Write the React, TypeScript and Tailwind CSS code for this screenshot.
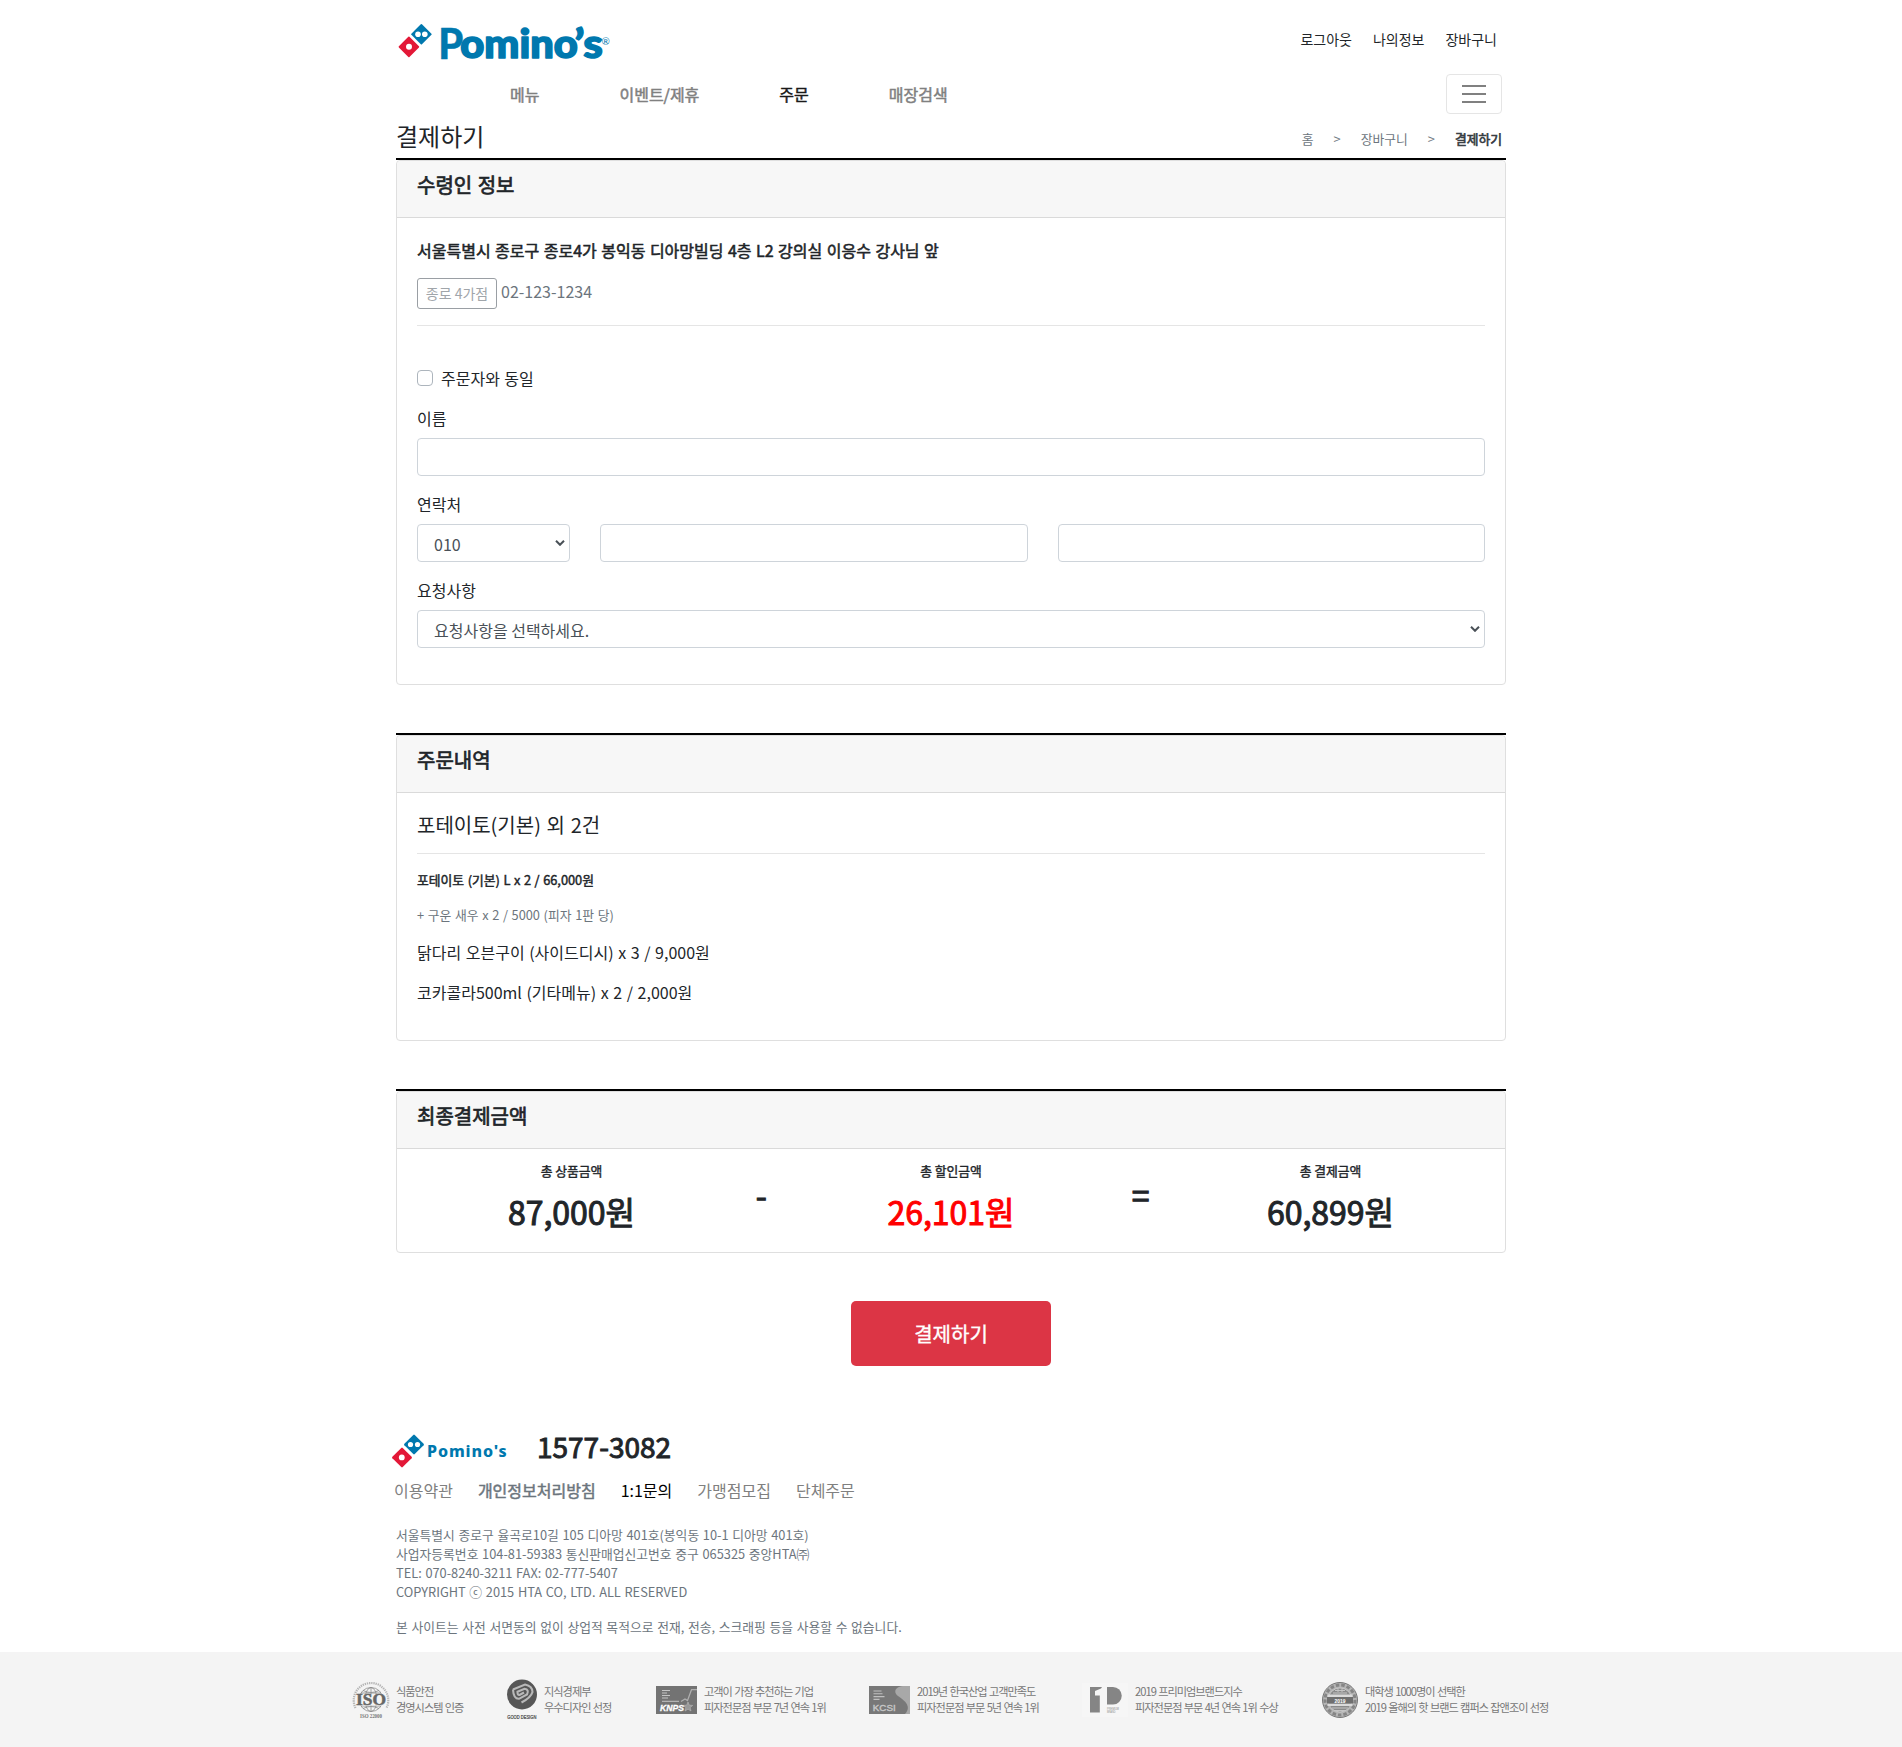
import React from "react";

function Dice({ className }: { className: string }) {
  return (
    <svg viewBox="0 0 34 34" className={className} aria-hidden="true">
      <rect x="15.7" y="3.2" width="14.6" height="14.6" rx="1" transform="rotate(45 23 10.5)" fill="#0078ae" />
      <rect x="3.7" y="16.2" width="14.6" height="14.6" rx="1" transform="rotate(45 11 23.5)" fill="#e31837" />
      <circle cx="19.5" cy="10.5" r="2.6" fill="#fff" />
      <circle cx="26.5" cy="10.5" r="2.6" fill="#fff" />
      <circle cx="10.8" cy="23.4" r="2.9" fill="#fff" />
    </svg>
  );
}

function HeaderLogo() {
  return (
    <svg width="224" height="48" viewBox="396 16 224 48" className="block overflow-visible">
      <rect x="413.9" y="26.8" width="15" height="15" rx="0.8" transform="rotate(45 421.4 34.3)" fill="#0078ae" />
      <rect x="401.4" y="39.4" width="15" height="15" rx="0.8" transform="rotate(45 408.9 46.9)" fill="#e31837" />
      <circle cx="418" cy="34.3" r="2.8" fill="#fff" />
      <circle cx="424.8" cy="34.3" r="2.8" fill="#fff" />
      <circle cx="409" cy="46.8" r="3" fill="#fff" />
      <g fontFamily="Lato" fontWeight="900" fill="#0078ae" stroke="#0078ae" strokeLinejoin="round">
        <text x="438.2" y="58.6" fontSize="42" strokeWidth="0.4" textLength="25" lengthAdjust="spacingAndGlyphs">
          P
        </text>
        <text x="460.3" y="57.9" fontSize="39" strokeWidth="1.6" textLength="117.5" lengthAdjust="spacingAndGlyphs">
          omino
        </text>
        <text x="574.5" y="58" fontSize="40" strokeWidth="1.4" textLength="28.5" lengthAdjust="spacingAndGlyphs">
          ’s
        </text>
      </g>
      <text x="601.500" y="45" fontFamily="Lato" fontSize="10" fill="#0078ae">
        ®
      </text>
    </svg>
  );
}

function Card({ title, className, children }: { title: string; className: string; children: React.ReactNode }) {
  return (
    <section className="border-t-2 border-black">
      <div className={"flex flex-col rounded border border-[#dfdfdf] " + className}>
        <h5 className="h-[57px] shrink-0 rounded-t border-b border-[#dadada] bg-[#f7f7f7] px-5 pt-3 text-xl leading-6 [-webkit-text-stroke:0.7px] [word-spacing:1px]">
          {title}
        </h5>
        {children}
      </div>
    </section>
  );
}

function Chevron() {
  return (
    <svg width="10" height="6" viewBox="0 0 10 6" fill="none" stroke="#495057" strokeWidth="2" className="block">
      <path d="M1 0.8 5 4.8 9 0.8" />
    </svg>
  );
}

function Select({ text }: { text: string }) {
  return (
    <div className="flex h-[38px] items-center justify-between rounded border border-[#ced4da] pr-[4px] pl-4 text-[#495057]">
      <span className="pt-0.5">{text}</span>
      <Chevron />
    </div>
  );
}

function TextField() {
  return <input className="block h-[38px] w-full rounded border border-[#ced4da] px-3" />;
}

function Amount({ label, value, red }: { label: string; value: string; red?: boolean }) {
  return (
    <div className="text-center">
      <div className="text-[12.8px] leading-[19px] [-webkit-text-stroke:0.4px]">{label}</div>
      <div className={"mt-3 text-[32px] leading-[38px] [-webkit-text-stroke:1px] " + (red ? "text-[#ff0000]" : "")}>{value}</div>
    </div>
  );
}

function Operator({ sign }: { sign: string }) {
  return <div className="pt-[14px] text-center text-[32px] leading-[38px] [-webkit-text-stroke:1px]">{sign}</div>;
}

function IsoMark() {
  return (
    <svg width="38" height="38" viewBox="0 0 38 38" fill="none" stroke="#8a8a8a" className="block">
      <path d="M3.5 27A17.3 17.3 0 1 1 34.5 27" strokeWidth="2.2" strokeDasharray="1.3 .9" opacity=".6" />
      <circle cx="19" cy="18.5" r="12" strokeWidth=".8" />
      <ellipse cx="19" cy="18.5" rx="6" ry="12" strokeWidth=".8" />
      <path d="M19 6.5v24M9 12h20M9 25h20M11 9.5q8 4 16 0M11 27.5q8-4 16 0" strokeWidth=".8" />
      <rect x="4" y="13" width="30" height="11.5" fill="#f4f4f4" stroke="none" />
      <text x="4" y="24" fontFamily="Liberation Serif" fontWeight="700" fontSize="16" fill="#666" stroke="#666" strokeWidth=".5" textLength="30" lengthAdjust="spacingAndGlyphs">
        ISO
      </text>
      <text x="8" y="37.3" fontFamily="Liberation Serif" fontWeight="700" fontSize="5.5" fill="#777" stroke="none" textLength="22" lengthAdjust="spacingAndGlyphs">
        ISO 22000
      </text>
    </svg>
  );
}

function GoodDesignMark() {
  return (
    <svg width="30" height="42" viewBox="0 0 30 42" fill="none" className="block overflow-visible">
      <circle cx="15" cy="15.5" r="15" fill="#575757" />
      <path
        d="M6 10.500 18 5.500Q25.500 7 25.500 13 24 18.500 14.500 23.500M6 10.500Q6.500 20 12 19.800L20 15.500Q22.500 10.500 17.500 9.800L10.500 12.800Q10.500 16.500 12.500 16L17 13.500"
        stroke="#b9b9b9"
        strokeWidth="2.1"
      />
      <text x="0.3" y="40.2" fontFamily="Liberation Sans" fontSize="5.5" fill="#3f3f3f" stroke="#3f3f3f" strokeWidth=".2" textLength="29" lengthAdjust="spacingAndGlyphs">
        GOOD DESIGN
      </text>
    </svg>
  );
}

function KnpsMark() {
  return (
    <svg width="41" height="28" viewBox="0 0 41 28" className="block">
      <rect width="41" height="28" fill="#737373" />
      <path d="M6 4.5h8M6 7h5M6 9.500h8M6 12h6M6 15.300h17" stroke="#c4c4c4" strokeWidth="1" />
      <path d="M25 15.500 29 13 31.500 14.500 35.500 3.700H41" fill="none" stroke="#b0b0b0" strokeWidth="1.200" />
      <path d="m32 16 1.300 3.200 3.400.2-2.600 2.200.9 3.400-3-1.900-2.900 1.900.8-3.400-2.600-2.200 3.400-.2z" fill="#999" stroke="#bbb" strokeWidth=".6" />
      <text x="4" y="24.700" fontFamily="Liberation Sans" fontWeight="700" fontStyle="italic" fontSize="9" fill="#fff" stroke="#fff" strokeWidth=".3" textLength="24" lengthAdjust="spacingAndGlyphs">
        KNPS
      </text>
    </svg>
  );
}

function KcsiMark() {
  return (
    <svg width="41" height="28" viewBox="0 0 41 28" className="block">
      <rect width="41" height="28" fill="#787878" />
      <path d="M41 0H34C26 1 24 6 29 10 38 16 42 21 36 28H41Z" fill="#a8a8a8" />
      <path d="M4.500 5h8M4.500 7.800h9M4.500 10.600h11M4.500 13.400h6" stroke="#c0c0c0" strokeWidth="1.100" />
      <text x="3.800" y="24.500" fontFamily="Liberation Sans" fontSize="9.500" fill="#c6c6c6" stroke="#c6c6c6" strokeWidth=".4" textLength="23" lengthAdjust="spacingAndGlyphs">
        KCSI
      </text>
    </svg>
  );
}

function PremiumMark() {
  return (
    <svg width="46" height="34" viewBox="0 0 46 34" className="block">
      <rect width="46" height="34" fill="#f6f6f6" />
      <path d="M8 4H20L19 5.500 13 8V12.500H17.800V29.500H8Z" fill="#858585" />
      <path d="M25 4H31A8.700 8.700 0 0 1 31 21.500H25Z" fill="#858585" />
      <text x="25" y="26.500" fontFamily="Liberation Sans" fontSize="3.600" fill="#8d8d8d" textLength="12" lengthAdjust="spacingAndGlyphs">
        PREMIUM
      </text>
      <text x="25" y="30.300" fontFamily="Liberation Sans" fontSize="3.600" fill="#8d8d8d" textLength="8.5" lengthAdjust="spacingAndGlyphs">
        BRAND
      </text>
    </svg>
  );
}

function CampusMark() {
  return (
    <svg width="36" height="36" viewBox="0 0 36 36" fill="none" className="block">
      <circle cx="18" cy="18" r="17.500" fill="#b5b5b5" stroke="#777" />
      <circle cx="18" cy="18" r="15" stroke="#858585" strokeWidth="3" strokeDasharray="3.500 2" />
      <circle cx="18" cy="18" r="12" fill="#8a8a8a" stroke="#d0d0d0" strokeWidth=".8" />
      <path d="M13 8.500h10M11 11h14M10 26h16M13 28.500h10M16 7v3M20 7v3" stroke="#c4c4c4" strokeWidth="1" />
      <path d="M5.500 12.500H30.500V15H5.500ZM5.500 21.500H30.500V24H5.500Z" fill="#dadada" />
      <rect x="5" y="15" width="26" height="6.500" fill="#6f6f6f" />
      <text x="12.500" y="20.600" fontFamily="Liberation Sans" fontWeight="700" fontSize="6" fill="#fff" textLength="11" lengthAdjust="spacingAndGlyphs">
        2019
      </text>
    </svg>
  );
}

function Award({ className, mark, lines }: { className: string; mark: React.ReactNode; lines: string[] }) {
  return (
    <li className={"flex shrink-0 items-center " + className}>
      {mark}
      <p className="pb-0.5 text-[11.2px] leading-4 tracking-[-1px] whitespace-nowrap text-[#777777] [word-spacing:0.8px]">
        {lines[0]}
        <br />
        {lines[1]}
      </p>
    </li>
  );
}

export default function App() {
  return (
    <div className="flex h-[1747px] w-[1902px] flex-col overflow-hidden bg-white font-['Noto_Sans_CJK_KR',sans-serif] text-base leading-6 text-[#212529]">
      <div className="mx-auto w-[1110px]">
        <header>
          <div className="flex h-[74px] items-start justify-between">
            <div className="pt-4">
              <HeaderLogo />
            </div>
            <ul className="mr-[9px] flex gap-[21px] pt-[29px] text-sm leading-[21px]">
              <li>로그아웃</li>
              <li>나의정보</li>
              <li>장바구니</li>
            </ul>
          </div>
          <nav className="flex h-10 items-center justify-between pr-1 pl-[114px]">
            <ul className="flex gap-20 text-[#808080] [-webkit-text-stroke:0.5px]">
              <li>메뉴</li>
              <li>이벤트/제휴</li>
              <li className="text-[#1a1a1a]">주문</li>
              <li>매장검색</li>
            </ul>
            <button className="flex h-10 w-14 flex-col items-center justify-center gap-1.5 rounded border border-[#e5e5e5]">
              <span className="block h-0.5 w-6 bg-[#808080]" />
              <span className="block h-0.5 w-6 bg-[#808080]" />
              <span className="block h-0.5 w-6 bg-[#808080]" />
            </button>
          </nav>
          <div className="flex h-11 items-start justify-between pr-1">
            <h4 className="pt-[7px] text-2xl leading-[29px]">결제하기</h4>
            <ol className="flex pt-[15px] text-[12.8px] leading-5 text-[#6c757d]">
              <li>홈</li>
              <li className="px-5">&gt;</li>
              <li>장바구니</li>
              <li className="px-5">&gt;</li>
              <li className="text-[#343a40] [-webkit-text-stroke:0.6px]">결제하기</li>
            </ol>
          </div>
        </header>

        <main>
          <Card title="수령인 정보" className="h-[525px]">
            <div className="px-5 pt-5">
              <p className="[-webkit-text-stroke:0.55px] [word-spacing:0.9px]">
                서울특별시 종로구 종로4가 봉익동 디아망빌딩 4층 L2 강의실 이응수 강사님 앞
              </p>
              <p className="mt-4 flex h-[31px] items-start gap-1 text-[#6c757d]">
                <span className="h-[31px] w-20 rounded-[3px] border border-[#9a9fa4] text-center text-sm leading-[29px] text-[#a0a5aa]">
                  종로 4가점
                </span>
                <span className="pt-[1px]">02-123-1234</span>
              </p>
              <hr className="mt-4 border-[#e5e5e5]" />
              <label className="mt-10 flex h-6 items-center gap-2">
                <span className="block size-4 rounded border border-[#adb5bd]" />
                <span className="[word-spacing:0.8px]">주문자와 동일</span>
              </label>
              <p className="mt-4">이름</p>
              <div className="mt-2">
                <TextField />
              </div>
              <p className="mt-4">연락처</p>
              <div className="mt-2 grid grid-cols-[153px_1fr_1fr] gap-[30px]">
                <Select text="010" />
                <TextField />
                <TextField />
              </div>
              <p className="mt-4">요청사항</p>
              <div className="mt-2">
                <Select text="요청사항을 선택하세요." />
              </div>
            </div>
          </Card>

          <div className="mt-12">
            <Card title="주문내역" className="h-[306px]">
              <div className="px-5 pt-5">
                <h5 className="text-xl leading-6 [word-spacing:1.2px]">포테이토(기본) 외 2건</h5>
                <hr className="mt-4 border-[#e5e5e5]" />
                <p className="mt-4 text-[12.8px] leading-[19px] [-webkit-text-stroke:0.45px] [word-spacing:0.7px]">포테이토 (기본) L x 2 / 66,000원</p>
                <p className="mt-4 text-[12.8px] leading-[19px] text-[#6c757d] [word-spacing:0.78px]">+ 구운 새우 x 2 / 5000 (피자 1판 당)</p>
                <p className="mt-4 [word-spacing:1px]">닭다리 오븐구이 (사이드디시) x 3 / 9,000원</p>
                <p className="mt-4 [word-spacing:1px]">코카콜라500ml (기타메뉴) x 2 / 2,000원</p>
              </div>
            </Card>
          </div>

          <div className="mt-12">
            <Card title="최종결제금액" className="h-[162px]">
              <div className="mx-auto grid grid-cols-[284.500px_95px_284.500px_95px_284.500px] pt-3">
                <Amount label="총 상품금액" value="87,000원" />
                <Operator sign="-" />
                <Amount label="총 할인금액" value="26,101원" red />
                <Operator sign="=" />
                <Amount label="총 결제금액" value="60,899원" />
              </div>
            </Card>
          </div>

          <div className="mt-12 flex justify-center">
            <button className="h-[65px] w-[200px] rounded-[5px] bg-[#dc3545] text-xl text-white [-webkit-text-stroke:0.4px]">결제하기</button>
          </div>
        </main>

        <footer className="h-[286px] pt-[66px]">
          <div className="flex h-[42px] items-start">
            <Dice className="-ml-[5px] mt-[2px] block size-[34px]" />
            <span className="mt-[7px] ml-[2px] w-[110px] font-['Noto_Sans'] text-base font-extrabold tracking-[0.9px] text-[#0078ae]">Pomino's</span>
            <span className="-mt-[3px] text-[28px] leading-[34px] [-webkit-text-stroke:0.95px]">1577-3082</span>
          </div>
          <ul className="-ml-0.5 mt-1 flex gap-[25px] text-[#808080]">
            <li>이용약관</li>
            <li className="text-[#6c757d] [-webkit-text-stroke:0.5px]">개인정보처리방침</li>
            <li className="text-black">1:1문의</li>
            <li>가맹점모집</li>
            <li>단체주문</li>
          </ul>
          <p className="mt-[23px] text-[12.8px] leading-[19px] text-[#6c757d] [word-spacing:0.8px]">
            서울특별시 종로구 율곡로10길 105 디아망 401호(봉익동 10-1 디아망 401호)
            <br />
            사업자등록번호 104-81-59383 통신판매업신고번호 중구 065325 중앙HTA㈜
            <br />
            TEL: 070-8240-3211 FAX: 02-777-5407
            <br />
            COPYRIGHT ⓒ 2015 HTA CO, LTD. ALL RESERVED
          </p>
          <p className="mt-4 text-[12.8px] leading-[19px] text-[#6c757d] [word-spacing:0.8px]">
            본 사이트는 사전 서면동의 없이 상업적 목적으로 전재, 전송, 스크래핑 등을 사용할 수 없습니다.
          </p>
        </footer>
      </div>

      <div className="h-[95px] shrink-0 bg-[#f4f4f4]">
        <ul className="flex h-[95px] pl-[352px]">
          <Award className="w-[155px] gap-1.5" mark={<IsoMark />} lines={["식품안전", "경영시스템 인증"]} />
          <Award className="w-[149px] gap-[7px]" mark={<GoodDesignMark />} lines={["지식경제부", "우수디자인 선정"]} />
          <Award className="w-[213px] gap-[7px]" mark={<KnpsMark />} lines={["고객이 가장 추천하는 기업", "피자전문점 부문 7년 연속 1위"]} />
          <Award className="w-[213px] gap-[7px]" mark={<KcsiMark />} lines={["2019년 한국산업 고객만족도", "피자전문점 부문 5년 연속 1위"]} />
          <Award className="w-[240px] gap-[7px]" mark={<PremiumMark />} lines={["2019 프리미엄브랜드지수", "피자전문점 부문 4년 연속 1위 수상"]} />
          <Award className="w-[240px] gap-[7px]" mark={<CampusMark />} lines={["대학생 1000명이 선택한", "2019 올해의 핫 브랜드 캠퍼스 잡앤조이 선정"]} />
        </ul>
      </div>
    </div>
  );
}
